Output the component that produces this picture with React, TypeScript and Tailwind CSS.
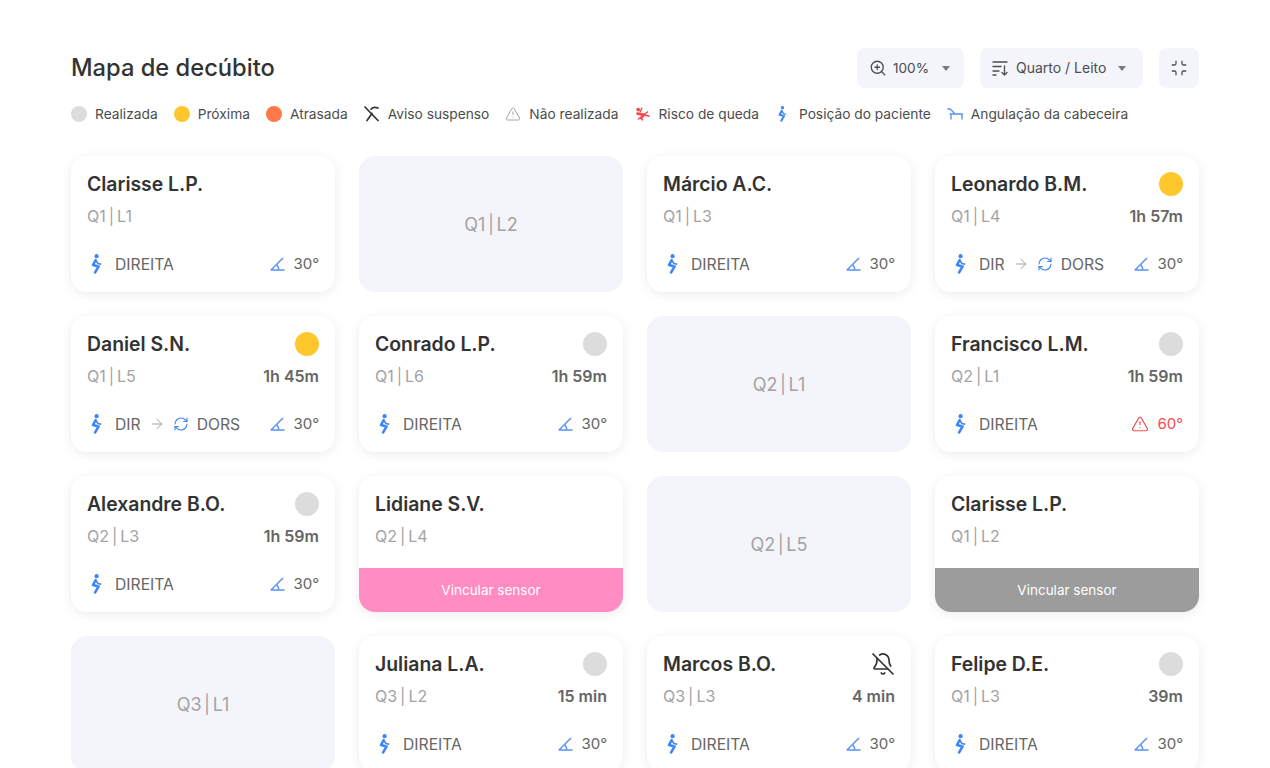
import { ZoomIn, Minimize, BellOff, TriangleAlert, RefreshCw, ArrowRight } from "lucide-react";

type Bed = {
  name?: string;
  place: string;
  dot?: "gray" | "yellow" | "bell";
  time?: string;
  next?: boolean;
  angle?: string;
  link?: "pink" | "gray";
};

const beds: Bed[] = [
  { name: "Clarisse L.P.", place: "Q1 | L1" },
  { place: "Q1 | L2" },
  { name: "Márcio A.C.", place: "Q1 | L3" },
  { name: "Leonardo B.M.", place: "Q1 | L4", dot: "yellow", time: "1h 57m", next: true },
  { name: "Daniel S.N.", place: "Q1 | L5", dot: "yellow", time: "1h 45m", next: true },
  { name: "Conrado L.P.", place: "Q1 | L6", dot: "gray", time: "1h 59m" },
  { place: "Q2 | L1" },
  { name: "Francisco L.M.", place: "Q2 | L1", dot: "gray", time: "1h 59m", angle: "60°" },
  { name: "Alexandre B.O.", place: "Q2 | L3", dot: "gray", time: "1h 59m" },
  { name: "Lidiane S.V.", place: "Q2 | L4", link: "pink" },
  { place: "Q2 | L5" },
  { name: "Clarisse L.P.", place: "Q1 | L2", link: "gray" },
  { place: "Q3 | L1" },
  { name: "Juliana L.A.", place: "Q3 | L2", dot: "gray", time: "15 min" },
  { name: "Marcos B.O.", place: "Q3 | L3", dot: "bell", time: "4 min" },
  { name: "Felipe D.E.", place: "Q1 | L3", dot: "gray", time: "39m" },
];

function PersonIcon({ height = 20 }: { height?: number }) {
  return (
    <svg height={height} viewBox="0 0 12 20" className="shrink-0 text-[#3f87f5]" fill="none" stroke="currentColor" strokeLinecap="round" strokeLinejoin="round">
      <circle cx="5.6" cy="2.2" r="2.1" fill="currentColor" stroke="none" />
      <path d="M4.6 6.2 2 11l5.5 1.6-3.4 5.8" strokeWidth="2.6" />
      <path d="M5 6.5 7 9.5l2.5.6" strokeWidth="1.6" />
    </svg>
  );
}

function AngleIcon() {
  return (
    <svg width="15" height="14" viewBox="0 0 15 14" className="shrink-0 text-[#5b93f5]" fill="none" stroke="currentColor" strokeWidth="1.5">
      <path d="M0.5 13h14M1 13 13 1" />
      <path d="M6.5 7.5C8 9 8.8 11 8.8 13" />
    </svg>
  );
}

function BedAngleIcon() {
  return (
    <svg width="16" height="12" viewBox="0 0 16 12" className="shrink-0 text-[#5b93f5]" fill="none" stroke="currentColor" strokeWidth="1.4" strokeLinecap="round">
      <path d="M0.8 1h2.4L8 6M3 6h12.5M4 6v5M15 6v5" />
    </svg>
  );
}

function FallIcon() {
  return (
    <svg width="16" height="14" viewBox="0 0 16 14" className="shrink-0 text-[#f44a4f]" fill="none" stroke="currentColor" strokeLinecap="round" strokeLinejoin="round">
      <circle cx="3.2" cy="2.6" r="1.9" fill="currentColor" stroke="none" />
      <path d="M2.5 6.6 9 7.8 6 11" strokeWidth="2.6" />
      <path d="M6.8 1 5.2 5M9 7.5l3.6-2.6M9 8l5 1M6 11l1.5 2M5.5 10.5l-2 1.5" strokeWidth="1.4" />
    </svg>
  );
}

function AlarmOffIcon() {
  return (
    <svg width="16" height="16" viewBox="0 0 16 16" className="shrink-0 text-[#333333]" fill="none" stroke="currentColor" strokeWidth="1.7" strokeLinecap="round">
      <path d="M1 1 14 14.5" />
      <path d="M7 3.2C8.5 1.5 11.5 1.2 14 2" />
      <path d="M8 7.5 3 14.5" />
    </svg>
  );
}

function SortIcon() {
  return (
    <svg width="16" height="16" viewBox="0 0 16 16" className="shrink-0 text-[#4d4d4d]" fill="none" stroke="currentColor" strokeWidth="1.3" strokeLinecap="round" strokeLinejoin="round">
      <path d="M1 2h14M1 6.5h8M1 11h6M1 15h3" />
      <path d="M12.5 6v9M10 12.5l2.5 2.5 2.5-2.5" />
    </svg>
  );
}

function Caret() {
  return <span className="h-0 w-0 border-x-4 border-t-[5px] border-x-transparent border-t-[#7a7a7a]" />;
}

function LegendItem({ icon, label }: { icon: React.ReactNode; label: string }) {
  return (
    <div className="flex items-center gap-2">
      <span className="flex w-4 justify-center">{icon}</span>
      <span>{label}</span>
    </div>
  );
}

function Dot({ color }: { color: string }) {
  return <span className={`h-4 w-4 rounded-full ${color}`} />;
}

function Position({ next }: { next?: boolean }) {
  if (next) {
    return (
      <div className="flex items-center text-[#666666]">
        <span className="flex w-5 justify-center">
          <PersonIcon />
        </span>
        <span className="ml-2 pt-[2px]">DIR</span>
        <ArrowRight size={16} strokeWidth={1.5} className="mx-2 text-[#a3a3a3]" />
        <RefreshCw size={16} strokeWidth={1.7} className="text-[#3f87f5]" />
        <span className="ml-2 pt-[2px]">DORS</span>
      </div>
    );
  }
  return (
    <div className="flex items-center gap-2 text-[#666666]">
      <span className="flex w-5 justify-center">
        <PersonIcon />
      </span>
      <span className="pt-[2px]">DIREITA</span>
    </div>
  );
}

function BedCard({ bed }: { bed: Bed }) {
  if (!bed.name) {
    return (
      <div className="flex h-[136px] items-center justify-center rounded-2xl bg-[#f4f5fa] text-[18px] text-[#a3a3a3] [word-spacing:-2.5px]">
        {bed.place}
      </div>
    );
  }

  return (
    <div className="flex h-[136px] flex-col overflow-hidden rounded-2xl bg-white shadow-[0_2px_12px_rgba(0,0,0,0.08)]">
      <div className="px-4 pt-4">
        <div className="flex h-6 items-center justify-between">
          <span className="pt-[2px] text-[19.4px] font-semibold text-[#333333]">{bed.name}</span>
          {bed.dot === "gray" && <span className="h-6 w-6 rounded-full bg-[#dcdcdc]" />}
          {bed.dot === "yellow" && <span className="h-6 w-6 rounded-full bg-[#ffc72c]" />}
          {bed.dot === "bell" && <BellOff size={24} strokeWidth={1.7} className="text-[#333333]" />}
        </div>
        <div className="mt-2 flex h-6 items-center justify-between">
          <span className="text-base text-[#a3a3a3] [word-spacing:-1.5px]">{bed.place}</span>
          {bed.time && <span className="text-base font-semibold text-[#666666]">{bed.time}</span>}
        </div>
      </div>
      {bed.link ? (
        <div className={`mt-auto flex h-11 items-center justify-center text-[13.5px] text-white ${bed.link === "pink" ? "bg-[#ff8cc3]" : "bg-[#9c9c9c]"}`}>
          Vincular sensor
        </div>
      ) : (
        <div className="mb-4 mt-auto flex h-6 items-center justify-between px-4 text-[15.7px]">
          <Position next={bed.next} />
          {bed.angle ? (
            <div className="flex items-center gap-2 text-[15px] text-[#f44a4f]">
              <TriangleAlert size={18} strokeWidth={1.6} />
              <span>{bed.angle}</span>
            </div>
          ) : (
            <div className="flex items-center gap-2 text-[15px] text-[#666666]">
              <AngleIcon />
              <span>30°</span>
            </div>
          )}
        </div>
      )}
    </div>
  );
}

export default function App() {
  return (
    <div className="h-screen overflow-hidden bg-white px-[71px] pt-12 font-['Inter',sans-serif] text-[#333333]">
      <header className="flex h-10 items-center justify-between">
        <h1 className="text-[23.7px] font-medium text-[#333333]">Mapa de decúbito</h1>
        <div className="flex items-center gap-4 text-[13.6px] text-[#4d4d4d]">
          <button className="flex h-10 w-[107px] items-center gap-[6px] rounded-lg bg-[#f4f5fa] pl-3">
            <ZoomIn size={18} strokeWidth={1.7} />
            <span>100%</span>
            <span className="ml-[7px] flex">
              <Caret />
            </span>
          </button>
          <button className="flex h-10 w-[163px] items-center gap-2 rounded-lg bg-[#f4f5fa] pl-3 text-sm">
            <SortIcon />
            <span>Quarto / Leito</span>
            <span className="ml-1 flex">
              <Caret />
            </span>
          </button>
          <button className="flex h-10 w-10 items-center justify-center rounded-lg bg-[#f4f5fa]">
            <Minimize size={18} strokeWidth={1.7} />
          </button>
        </div>
      </header>

      <div className="mt-[14px] flex h-6 items-center gap-4 text-[13.75px] text-[#4d4d4d]">
        <LegendItem icon={<Dot color="bg-[#dcdcdc]" />} label="Realizada" />
        <LegendItem icon={<Dot color="bg-[#ffc72c]" />} label="Próxima" />
        <LegendItem icon={<Dot color="bg-[#ff7849]" />} label="Atrasada" />
        <LegendItem icon={<AlarmOffIcon />} label="Aviso suspenso" />
        <LegendItem icon={<TriangleAlert size={16} strokeWidth={1.5} className="text-[#a3a3a3]" />} label="Não realizada" />
        <LegendItem icon={<FallIcon />} label="Risco de queda" />
        <LegendItem icon={<PersonIcon height={16} />} label="Posição do paciente" />
        <LegendItem icon={<BedAngleIcon />} label="Angulação da cabeceira" />
      </div>

      <div className="mt-[30px] grid grid-cols-4 gap-6">
        {beds.map((bed, i) => (
          <BedCard key={i} bed={bed} />
        ))}
      </div>
    </div>
  );
}
